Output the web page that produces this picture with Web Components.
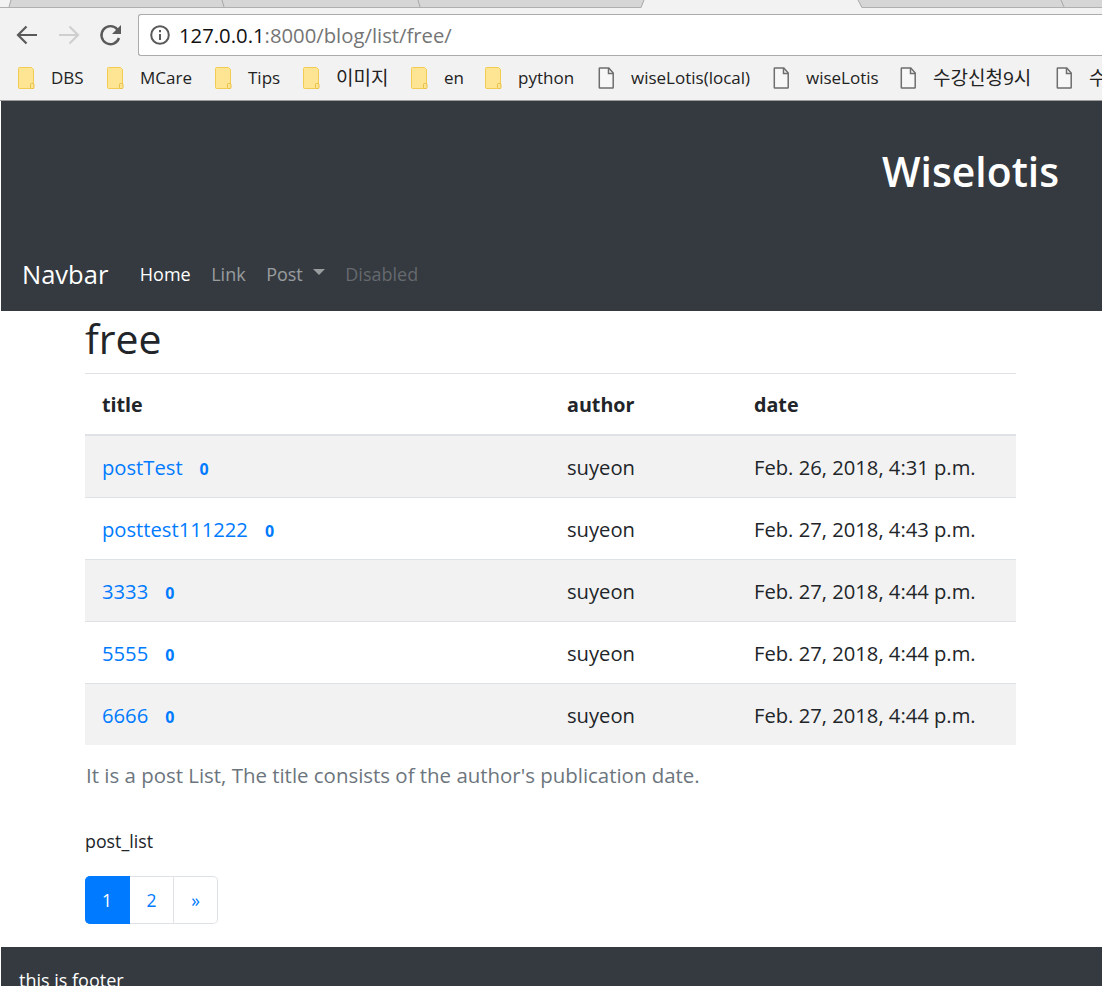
<!DOCTYPE html>
<html>
<head>
<meta charset="utf-8">
<title>free</title>
<style>
    html, body { margin: 0; padding: 0; height: 986px; overflow: hidden; background: #fff; }
    body { font-family: "Open Sans", "Noto Sans CJK KR", sans-serif; color: #212529; }
</style>
</head>
<body>
<browser-bar url-host="127.0.0.1" url-rest=":8000/blog/list/free/">
    <book-mark kind="folder" w="89">DBS</book-mark>
    <book-mark kind="folder" w="108">MCare</book-mark>
    <book-mark kind="folder" w="88">Tips</book-mark>
    <book-mark kind="folder" w="108" cjk>이미지</book-mark>
    <book-mark kind="folder" w="74">en</book-mark>
    <book-mark kind="folder" w="113">python</book-mark>
    <book-mark kind="page" w="175">wiseLotis(local)</book-mark>
    <book-mark kind="page" w="127">wiseLotis</book-mark>
    <book-mark kind="page" w="156" cjk>수강신청9시</book-mark>
    <book-mark kind="page" w="46" cjk>수</book-mark>
</browser-bar>
<site-header brand="Wiselotis">
    <nav-link slot="nav" state="active">Home</nav-link>
    <nav-link slot="nav">Link</nav-link>
    <nav-link slot="nav" caret>Post</nav-link>
    <nav-link slot="nav" state="disabled">Disabled</nav-link>
</site-header>
<post-list heading="free" lead="It is a post List, The title consists of the author's publication date." name="post_list">
    <post-row head title-text="title" author="author" date="date"></post-row>
    <post-row striped title-text="postTest" count="0" author="suyeon" date="Feb. 26, 2018, 4:31 p.m."></post-row>
    <post-row title-text="posttest111222" count="0" author="suyeon" date="Feb. 27, 2018, 4:43 p.m."></post-row>
    <post-row striped title-text="3333" count="0" author="suyeon" date="Feb. 27, 2018, 4:44 p.m."></post-row>
    <post-row title-text="5555" count="0" author="suyeon" date="Feb. 27, 2018, 4:44 p.m."></post-row>
    <post-row striped last title-text="6666" count="0" author="suyeon" date="Feb. 27, 2018, 4:44 p.m."></post-row>
    <page-nav slot="pager"></page-nav>
</post-list>
<site-footer>this is footer</site-footer>

<script>
var barTemplate = document.createElement("template");
barTemplate.innerHTML = `
    <style>
        :host { display: block; height: 101px; box-sizing: border-box; border-bottom: 1px solid #9c9c9c; background: #f2f2f2; overflow: hidden; font-family: "Open Sans", "Noto Sans CJK KR", sans-serif; }
        #tabs { display: block; width: 1102px; height: 8px; }
        #tool { display: flex; align-items: center; height: 53px; }
        #tool svg { flex: none; display: block; }
        #buttons { display: flex; flex: none; width: 138px; padding-left: 15px; box-sizing: border-box; gap: 18px; }
        #address { flex: none; width: 980px; height: 42px; box-sizing: border-box; background: #fff; border: 1px solid #ababab; border-right: none; border-radius: 3px 0 0 3px; display: flex; align-items: center; padding-left: 11px; font-size: 20.300px; color: #757575; white-space: nowrap; gap: 9px; }
        #address b { font-weight: 400; color: #111; }
        #marks { display: flex; align-items: center; height: 34px; padding-left: 18px; white-space: nowrap; }
    </style>
    <svg id="tabs" viewBox="0 0 1102 8">
        <path d="M9 7 11 0H1102V7Z" fill="#d6d6d6"/>
        <path d="M9 7 11 0M222 0l2 7M418 0l2 7" fill="none" stroke="#a8a8a8"/>
        <path d="M0 7.500H1102" stroke="#b0b0b0"/>
        <path d="M641 8 644 0H858L862 8Z" fill="#f2f2f2"/>
        <path d="M641 7.500 644 0M858 0l4 7.500M1061 0l3 7" fill="none" stroke="#a8a8a8"/>
    </svg>
    <div id="tool">
        <div id="buttons">
            <svg width="24" height="24" viewBox="0 0 24 24" fill="none" stroke="#5a5a5a" stroke-width="2.2"><path d="M22 12H3M11.500 3.500 3 12l8.500 8.500"/></svg>
            <svg width="24" height="24" viewBox="0 0 24 24" fill="none" stroke="#cfcfcf" stroke-width="2.2"><path d="M2 12h19M12.500 3.500 21 12l-8.500 8.500"/></svg>
            <svg width="24" height="24" viewBox="0 0 24 24" fill="none" stroke="#5a5a5a" stroke-width="2.4"><path d="M20 15a9 9 0 1 1-1.600-8.600"/><path fill="#5a5a5a" stroke="none" d="M22 2v9h-9z"/></svg>
        </div>
        <div id="address">
            <svg width="20" height="20" viewBox="0 0 20 20" fill="none" stroke="#5a5a5a" stroke-width="2"><circle cx="10" cy="10" r="8.800"/><path d="M10 9v6M10 5v2.200"/></svg>
            <span><b id="host"></b><span id="rest"></span></span>
        </div>
    </div>
    <div id="marks"><slot></slot></div>
`;

class BrowserBar extends HTMLElement
{
    constructor()
    {
        super();
        this.attachShadow({mode:"open"});
    }

    connectedCallback()
    {
        this.shadowRoot.appendChild(barTemplate.content.cloneNode(true));
        this.shadowRoot.querySelector("#host").textContent = this.getAttribute("url-host");
        this.shadowRoot.querySelector("#rest").textContent = this.getAttribute("url-rest");
    }
}

var folderIcon = `<svg width="17" height="22" viewBox="0 0 17 22"><path d="M1.500.5h12l2 2V20.500a1 1 0 0 1-1 1h-13a1 1 0 0 1-1-1V1.500a1 1 0 0 1 1-1z" fill="#fde594" stroke="#f2cb52"/><rect x="12.500" y="16.500" width="3.500" height="5" rx="1" fill="#fde594" stroke="#e9bf45"/></svg>`;
var pageIcon = `<svg width="17" height="22" viewBox="0 0 17 22" fill="#f7f7f7" stroke="#6e6e6e" stroke-width="1.500"><path d="M1.800 1h9l4.400 5v14.500a.5.5 0 0 1-.5.5H1.800a.5.5 0 0 1-.5-.5V1.500a.5.5 0 0 1 .5-.5z"/><path fill="none" d="M10.500 1v5.500h4.700"/></svg>`;

class BookMark extends HTMLElement
{
    constructor()
    {
        super();
        this.attachShadow({mode:"open"});
    }

    connectedCallback()
    {
        var icon = this.getAttribute("kind") == "folder" ? folderIcon : pageIcon;
        this.shadowRoot.innerHTML = `
            <style>
                :host { display: flex; flex: none; align-items: center; font-size: 17px; color: #222; box-sizing: border-box; }
                :host([cjk]) { font-size: 19px; }
                :host([cjk]) span { margin-top: -3px; }
                svg { display: block; flex: none; margin-right: 16px; }
                span { display: block; margin-top: -1px; }
            </style>
            ${icon}<span><slot></slot></span>
        `;
        this.style.width = this.getAttribute("w") + "px";
    }
}

var headerTemplate = document.createElement("template");
headerTemplate.innerHTML = `
    <style>
        :host { display: block; margin-left: 1px; height: 210px; background: #343a40; color: #fff; }
        #brand { display: flex; justify-content: flex-end; align-items: center; height: 139px; padding: 0 43px 2px 0; font-size: 40.800px; font-weight: 600; }
        #bar { display: flex; align-items: center; height: 69px; box-sizing: border-box; padding: 0 0 6px 21px; }
        #logo { font-size: 25.500px; margin-right: 31.500px; }
        #links { display: flex; align-items: center; }
    </style>
    <div id="brand"></div>
    <div id="bar">
        <div id="logo">Navbar</div>
        <div id="links"><slot name="nav"></slot></div>
    </div>
`;

class SiteHeader extends HTMLElement
{
    constructor()
    {
        super();
        this.attachShadow({mode:"open"});
    }

    connectedCallback()
    {
        this.shadowRoot.appendChild(headerTemplate.content.cloneNode(true));
        this.shadowRoot.querySelector("#brand").textContent = this.getAttribute("brand");
    }
}

class NavLink extends HTMLElement
{
    constructor()
    {
        super();
        this.attachShadow({mode:"open"});
    }

    connectedCallback()
    {
        var caret = this.hasAttribute("caret") ? `<i></i>` : "";
        this.shadowRoot.innerHTML = `
            <style>
                :host { display: flex; align-items: center; font-size: 18px; color: rgba(255,255,255,.5); margin-right: 20.500px; }
                :host([state="active"]) { color: #fff; }
                :host([state="disabled"]) { color: rgba(255,255,255,.25); }
                i { display: block; margin-left: 10px; border-top: 6px solid currentColor; border-left: 6px solid transparent; border-right: 6px solid transparent; margin-top: -3px; }
            </style>
            <slot></slot>${caret}
        `;
    }
}

var listTemplate = document.createElement("template");
listTemplate.innerHTML = `
    <style>
        :host { display: block; height: 636px; margin-left: 85px; width: 931px; }
        h1 { margin: 0; font-size: 41px; font-weight: 500; height: 63px; line-height: 55px; border-bottom: 1px solid #dee2e6; box-sizing: border-box; color: #212529; }
        #lead { height: 62px; padding: 16px 0 0 1px; box-sizing: border-box; font-size: 20.430px; color: #6c757d; margin: 0; white-space: nowrap; }
        #name { font-size: 17.800px; height: 69px; margin: 0; padding-top: 22px; box-sizing: border-box; color: #212529; }
    </style>
    <h1 id="heading"></h1>
    <slot></slot>
    <p id="lead"></p>
    <p id="name"></p>
    <slot name="pager"></slot>
`;

class PostList extends HTMLElement
{
    constructor()
    {
        super();
        this.attachShadow({mode:"open"});
    }

    connectedCallback()
    {
        this.shadowRoot.appendChild(listTemplate.content.cloneNode(true));
        this.shadowRoot.querySelector("#heading").textContent = this.getAttribute("heading");
        this.shadowRoot.querySelector("#lead").textContent = this.getAttribute("lead");
        this.shadowRoot.querySelector("#name").textContent = this.getAttribute("name");
    }
}

class PostRow extends HTMLElement
{
    constructor()
    {
        super();
        this.attachShadow({mode:"open"});
    }

    connectedCallback()
    {
        var title = this.getAttribute("title-text");
        var first = this.hasAttribute("head") ? title : `<a>${title}</a><b>${this.getAttribute("count")}</b>`;
        this.shadowRoot.innerHTML = `
            <style>
                :host { display: grid; grid-template-columns: 466px 187px 278px; height: 62px; box-sizing: border-box; border-bottom: 1px solid #dee2e6; font-size: 20.200px; color: #212529; align-items: center; white-space: nowrap; }
                :host([striped]) { background: #f2f2f2; }
                :host([last]) { height: 61px; border-bottom: none; }
                :host([head]) { border-bottom: 2px solid #dee2e6; font-weight: 700; font-size: 19.700px; padding-top: 1px; }
                div { padding-left: 16px; }
                div:first-of-type { padding-left: 17px; }
                a { color: #007bff; }
                b { color: #007bff; font-size: 16px; margin-left: 17px; font-weight: 700; }
            </style>
            <div>${first}</div>
            <div>${this.getAttribute("author")}</div>
            <div>${this.getAttribute("date")}</div>
        `;
    }
}

var pagerTemplate = document.createElement("template");
pagerTemplate.innerHTML = `
    <style>
        :host { display: flex; height: 48px; width: 133px; font-size: 17.500px; }
        a { display: flex; align-items: center; justify-content: center; box-sizing: border-box; color: #007bff; border: 1px solid #dee2e6; border-left: none; }
        a:nth-of-type(1) { width: 45px; background: #007bff; border-color: #007bff; color: #fff; border-radius: 5px 0 0 5px; }
        a:nth-of-type(2) { width: 44px; }
        a:nth-of-type(3) { width: 44px; border-radius: 0 5px 5px 0; }
    </style>
    <a>1</a><a>2</a><a>»</a>
`;

class PageNav extends HTMLElement
{
    constructor()
    {
        super();
        this.attachShadow({mode:"open"});
    }

    connectedCallback()
    {
        this.shadowRoot.appendChild(pagerTemplate.content.cloneNode(true));
    }
}

class SiteFooter extends HTMLElement
{
    constructor()
    {
        super();
        this.attachShadow({mode:"open"});
        this.shadowRoot.innerHTML = `
            <style>
                :host { display: block; margin-left: 1px; height: 60px; box-sizing: border-box; background: #343a40; color: #fff; font-size: 18px; padding: 21px 0 0 18px; }
            </style>
            <slot></slot>
        `;
    }
}

customElements.define("browser-bar", BrowserBar);
customElements.define("book-mark", BookMark);
customElements.define("site-header", SiteHeader);
customElements.define("nav-link", NavLink);
customElements.define("post-list", PostList);
customElements.define("post-row", PostRow);
customElements.define("page-nav", PageNav);
customElements.define("site-footer", SiteFooter);
</script>
</body>
</html>
